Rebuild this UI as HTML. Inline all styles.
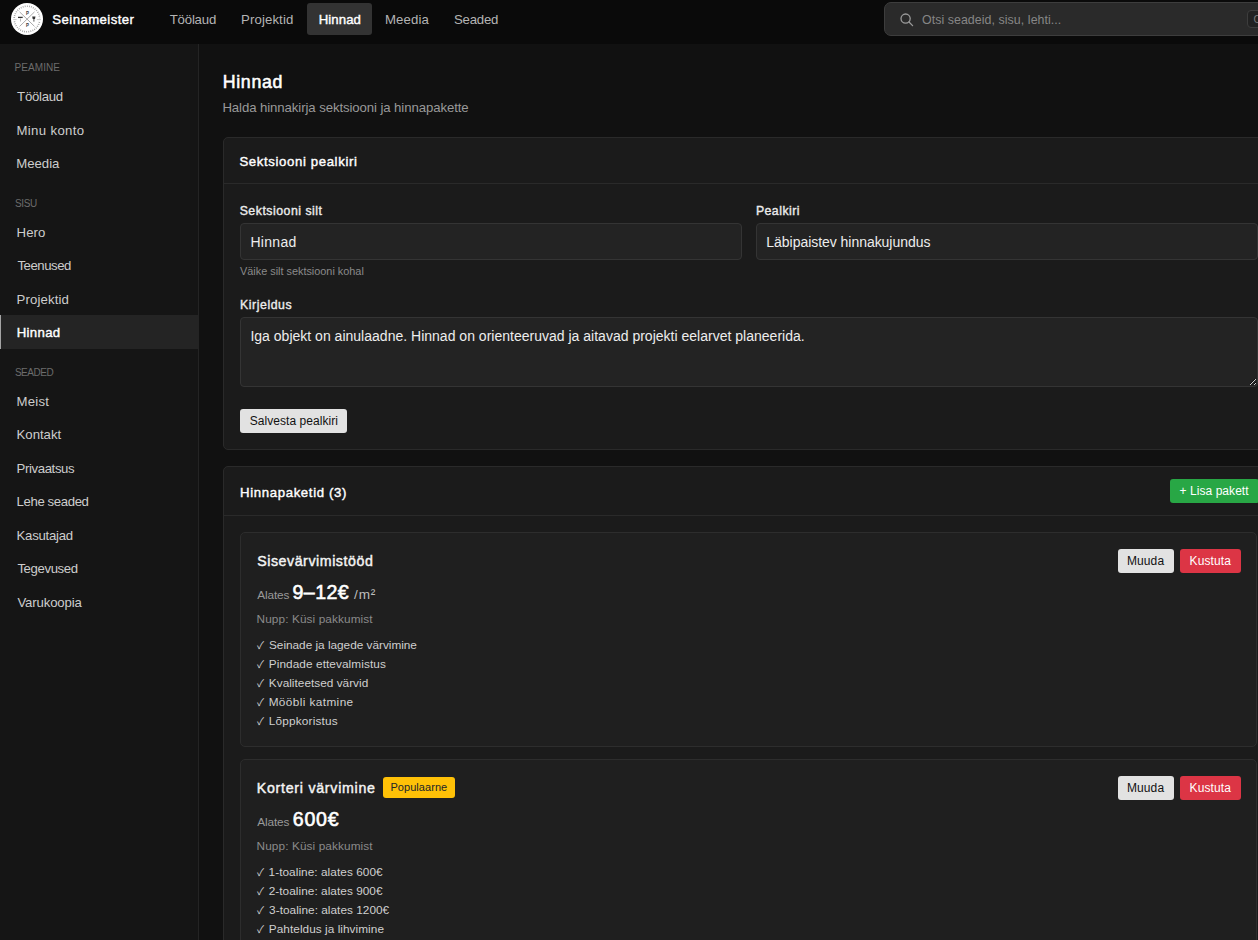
<!DOCTYPE html>
<html lang="et">
<head>
<meta charset="utf-8">
<title>Hinnad – Seinameister</title>
<style>
*{box-sizing:border-box;margin:0;padding:0}
html,body{width:1258px;height:940px;overflow:hidden;background:#111;color:#e6e6e6;
  font-family:"Liberation Sans",sans-serif;font-size:13px}
body *{position:absolute}
.t{white-space:nowrap;line-height:1;font-style:normal;font-weight:normal;text-decoration:none}
.b{font-weight:normal;-webkit-text-stroke:.03em}
header{background:#0a0a0a}
.pill{border-radius:3px;background:#333}
#search{background:#2a2a2a;border:1px solid #3d3d3d;border-radius:7px}
kbd{background:#222;border:1px solid #3d3d3d;border-radius:4px;font-family:inherit}
aside{background:#151515;border-right:1px solid #242424}
.cur{background:#242424;border-left:1px solid #a4a4a4}
.card{background:#1b1b1b;border:1px solid #2a2a2a;border-radius:5px}
.hr{background:#2a2a2a}
.inp{background:#232323;border:1px solid #343434;border-radius:4px}
button{font-family:inherit;color:inherit}
.btn{border-radius:3px}
.light{background:#e2e2e2}.green{background:#28a745}.red{background:#dc3545}
.pkg{background:#1f1f1f;border:1px solid #2d2d2d;border-radius:5px}
.badge{background:#ffc107;border-radius:3px}
ul{list-style:none}
.ck{font-family:"Liberation Sans","Noto Sans CJK JP",sans-serif}
.nav{color:#b4b4b4}.si{color:#cdcdcd}.sl{color:#6c6c6c}
.w{color:#fff}.mut{color:#999}.dim{color:#8a8a8a}.li{color:#cfcfcf}
</style>
</head>
<body>
<header style="left:0px;top:0px;width:1258px;height:44px;">
  <svg id="logo" style="left:11px;top:3px" width="32" height="32" viewBox="0 0 32 32">
    <circle cx="16" cy="16" r="16" fill="#fff"/>
    <circle cx="16" cy="16" r="12.8" fill="none" stroke="#9a9a9a" stroke-width="1.6" stroke-dasharray="0.8 1.3" transform="rotate(14 16 16)"/>
    <path d="M1.6 15.3h4.8v2.6H1.6zM25.4 15.3h4.8v2.6h-4.8z" fill="#fff"/>
    <path d="M2.2 16.6h3.4M25.8 16.6h4.2" stroke="#b5b5b5" stroke-width=".7"/>
    <path d="M8.6 8.9L23.5 23.4M23.5 8.9L8.6 23.4" stroke="#858585" stroke-width=".7" fill="none"/>
    <text transform="translate(16.4 12.1) scale(.74 1)" font-size="5.9" font-weight="bold" text-anchor="middle" fill="#3a3a3a" font-family="Liberation Sans,sans-serif">P</text>
    <text transform="translate(16.4 24.3) scale(.74 1)" font-size="5.9" font-weight="bold" text-anchor="middle" fill="#3a3a3a" font-family="Liberation Sans,sans-serif">P</text>
    <path d="M7 14.4h4.7" stroke="#333" stroke-width="1.3" fill="none"/>
    <path d="M9.5 15.5v3" stroke="#aaa" stroke-width=".8" fill="none"/>
    <path d="M21.2 13.4h3.3l-.5 2.7h-2.3z" fill="#333"/>
    <path d="M22.9 16v2.6" stroke="#555" stroke-width="1" fill="none"/>
  </svg>
  <a class="t b w" style="left:52.32px;top:13.41px;font-size:13.2px;letter-spacing:0.42px;">Seinameister</a>
  <nav style="left:158px;top:3px;width:352px;height:32px;">
    <a class="t nav" style="left:11.78px;top:10.11px;font-size:13.2px;letter-spacing:-0.2px;">Töölaud</a>
    <a class="t nav" style="left:83px;top:10.11px;font-size:13.2px;letter-spacing:0.12px;">Projektid</a>
    <span class="pill" style="left:149px;top:0px;width:65px;height:32px;"></span>
    <a class="t b w" style="left:160.73px;top:10.11px;font-size:13.2px;letter-spacing:0.08px;">Hinnad</a>
    <a class="t nav" style="left:227px;top:10.11px;font-size:13.2px;letter-spacing:0.12px;">Meedia</a>
    <a class="t nav" style="left:296px;top:10.11px;font-size:13.2px;letter-spacing:-0.22px;">Seaded</a>
  </nav>
  <div id="search" style="left:884px;top:2px;width:460px;height:34px;">
    <svg style="left:15px;top:10px" width="14" height="14" viewBox="0 0 14 14" fill="none" stroke="#9a9a9a" stroke-width="1.3" stroke-linecap="round"><circle cx="5.6" cy="5.6" r="4.6"/><path d="M9 9l3.6 3.6"/></svg>
    <span class="t" style="left:36.94px;top:11.21px;font-size:12.4px;letter-spacing:0.06px;color:#868686">Otsi seadeid, sisu, lehti...</span>
    <kbd style="left:362px;top:7px;width:60px;height:18px;">
      <span class="t" style="left:5.55px;top:4.21px;font-size:10px;color:#7a7a7a">Ctrl K</span>
    </kbd>
  </div>
</header>
<aside style="left:0px;top:44px;width:199px;height:896px;">
  <span class="cur" style="left:0px;top:271px;width:198px;height:34px;"></span>
  <span class="t sl" style="left:14.51px;top:19.21px;font-size:10px;letter-spacing:0.08px;">PEAMINE</span>
  <a class="t si" style="left:17.12px;top:45.91px;font-size:13.2px;letter-spacing:-0.27px;">Töölaud</a>
  <a class="t si" style="left:16.53px;top:79.61px;font-size:13.2px;letter-spacing:0.34px;">Minu konto</a>
  <a class="t si" style="left:16.33px;top:112.81px;font-size:13.2px;letter-spacing:-0.04px;">Meedia</a>
  <span class="t sl" style="left:14.96px;top:155.1px;font-size:10px;letter-spacing:-0.38px;">SISU</span>
  <a class="t si" style="left:16.57px;top:182.11px;font-size:13.2px;letter-spacing:0.05px;">Hero</a>
  <a class="t si" style="left:17.38px;top:215px;font-size:13.2px;letter-spacing:-0.46px;">Teenused</a>
  <a class="t si" style="left:16.57px;top:248.91px;font-size:13.2px;letter-spacing:0.12px;">Projektid</a>
  <a class="t si b w" style="left:16.73px;top:281.61px;font-size:13.2px;letter-spacing:0.33px;">Hinnad</a>
  <span class="t sl" style="left:14.91px;top:324.01px;font-size:10px;letter-spacing:-0.46px;">SEADED</span>
  <a class="t si" style="left:16.57px;top:351px;font-size:13.2px;letter-spacing:0.24px;">Meist</a>
  <a class="t si" style="left:16.57px;top:384px;font-size:13.2px;letter-spacing:-0.03px;">Kontakt</a>
  <a class="t si" style="left:16.57px;top:418px;font-size:13.2px;letter-spacing:-0.39px;">Privaatsus</a>
  <a class="t si" style="left:16.57px;top:450.91px;font-size:13.2px;letter-spacing:-0.39px;">Lehe seaded</a>
  <a class="t si" style="left:16.57px;top:484.91px;font-size:13.2px;letter-spacing:-0.27px;">Kasutajad</a>
  <a class="t si" style="left:17.38px;top:517.81px;font-size:13.2px;letter-spacing:-0.38px;">Tegevused</a>
  <a class="t si" style="left:17.43px;top:551.81px;font-size:13.2px;letter-spacing:-0.15px;">Varukoopia</a>
</aside>
<main style="left:199px;top:44px;width:1059px;height:896px;overflow:hidden">
  <h1 class="t b w" style="left:23.73px;top:30.01px;font-size:17.8px;letter-spacing:0.66px;">Hinnad</h1>
  <p class="t mut" style="left:23.45px;top:57.31px;font-size:13.2px;letter-spacing:-0.09px;">Halda hinnakirja sektsiooni ja hinnapakette</p>
  <section class="card" style="left:24px;top:93px;width:1100px;height:313px;">
    <span class="hr" style="left:0px;top:45px;width:1098px;height:1px;"></span>
    <h2 class="t b w" style="left:15.43px;top:16.71px;font-size:13.2px;letter-spacing:0.62px;">Sektsiooni pealkiri</h2>
    <label class="t b" style="left:15.66px;top:67.3px;font-size:12.3px;letter-spacing:0.51px;color:#ececec">Sektsiooni silt</label>
    <div class="inp" style="left:16px;top:85px;width:502px;height:37px;">
      <span class="t" style="left:9.39px;top:11.11px;font-size:14px;letter-spacing:0.32px;color:#ededed">Hinnad</span>
    </div>
    <small class="t dim" style="left:16.01px;top:127.71px;font-size:10.9px;letter-spacing:-0.01px;">Väike silt sektsiooni kohal</small>
    <label class="t b" style="left:531.9px;top:66.91px;font-size:12.3px;letter-spacing:0.47px;color:#ececec">Pealkiri</label>
    <div class="inp" style="left:532px;top:85px;width:502px;height:37px;">
      <span class="t" style="left:9.35px;top:11.41px;font-size:14px;letter-spacing:-0.04px;color:#ededed">Läbipaistev hinnakujundus</span>
    </div>
    <label class="t b" style="left:16.08px;top:161.1px;font-size:12.3px;letter-spacing:0.55px;color:#ececec">Kirjeldus</label>
    <div class="inp" style="left:16px;top:179px;width:1018px;height:70px;">
      <span class="t" style="left:9.42px;top:10.91px;font-size:14px;letter-spacing:0.01px;color:#ededed">Iga objekt on ainulaadne. Hinnad on orienteeruvad ja aitavad projekti eelarvet planeerida.</span>
      <svg style="left:1009px;top:61px" width="6" height="6" viewBox="0 0 6 6" shape-rendering="crispEdges"><g fill="#0c0c0c"><rect x="0" y="4" width="1" height="1"/><rect x="1" y="3" width="1" height="1"/><rect x="2" y="2" width="1" height="1"/><rect x="3" y="1" width="1" height="1"/><rect x="4" y="0" width="1" height="1"/><rect x="4" y="4" width="1" height="1"/><rect x="5" y="3" width="1" height="1"/></g><g fill="#cdcdcd"><rect x="0" y="5" width="1" height="1"/><rect x="1" y="4" width="1" height="1"/><rect x="2" y="3" width="1" height="1"/><rect x="3" y="2" width="1" height="1"/><rect x="4" y="1" width="1" height="1"/><rect x="5" y="0" width="1" height="1"/><rect x="4" y="5" width="1" height="1"/><rect x="5" y="4" width="1" height="1"/></g></svg>
    </div>
    <button class="btn light" style="left:16px;top:271px;width:107px;height:24px;border:0">
      <span class="t" style="left:9.76px;top:5.8px;font-size:12px;letter-spacing:0.05px;color:#111">Salvesta pealkiri</span>
    </button>
  </section>
  <section class="card" style="left:24px;top:422px;width:1100px;height:560px;">
    <span class="hr" style="left:0px;top:48px;width:1098px;height:1px;"></span>
    <h2 class="t b w" style="left:16.12px;top:18.81px;font-size:13.2px;letter-spacing:0.63px;">Hinnapaketid (3)</h2>
    <button class="btn green" style="left:946px;top:12px;width:89px;height:24px;border:0">
      <span class="t w" style="left:9.62px;top:5.91px;font-size:12px;letter-spacing:0.05px;">+ Lisa pakett</span>
    </button>
    <article class="pkg" style="left:16px;top:65px;width:1017px;height:215px;">
      <h3 class="t b" style="left:16.16px;top:20.61px;font-size:14.2px;letter-spacing:0.56px;color:#f4f4f4">Sisevärvimistööd</h3>
      <button class="btn light" style="left:877px;top:16px;width:56px;height:24px;border:0">
        <span class="t" style="left:8.88px;top:6.11px;font-size:12px;letter-spacing:0.13px;color:#111">Muuda</span>
      </button>
      <button class="btn red" style="left:939px;top:16px;width:61px;height:24px;border:0">
        <span class="t w" style="left:9.57px;top:6.11px;font-size:12px;letter-spacing:0.12px;">Kustuta</span>
      </button>
      <span class="t mut" style="left:16.35px;top:56.71px;font-size:11.8px;letter-spacing:-0.15px;">Alates</span>
      <strong class="t b w" style="left:51.59px;top:49.71px;font-size:19.6px;letter-spacing:0.39px;">9–12€</strong>
      <span class="t" style="left:113.07px;top:54.71px;font-size:13.6px;letter-spacing:0.85px;color:#bdbdbd">/m²</span>
      <span class="t dim" style="left:15.57px;top:80.8px;font-size:11.8px;letter-spacing:0.1px;">Nupp: Küsi pakkumist</span>
      <ul style="left:16px;top:101px;width:400px;height:95.5px;">
        <li style="left:0px;top:0px;width:400px;height:19.1px;">
          <span class="t li ck" style="left:0.08px;top:6.8px;font-size:10.3px;">✓</span>
          <span class="t li" style="left:11.98px;top:5.8px;font-size:11.8px;letter-spacing:-0.01px;">Seinade ja lagede värvimine</span>
        </li>
        <li style="left:0px;top:19.1px;width:400px;height:19.1px;">
          <span class="t li ck" style="left:0.08px;top:6.81px;font-size:10.3px;">✓</span>
          <span class="t li" style="left:11.8px;top:5.81px;font-size:11.8px;letter-spacing:0.08px;">Pindade ettevalmistus</span>
        </li>
        <li style="left:0px;top:38.2px;width:400px;height:19.1px;">
          <span class="t li ck" style="left:0.08px;top:6.82px;font-size:10.3px;">✓</span>
          <span class="t li" style="left:11.85px;top:5.81px;font-size:11.8px;letter-spacing:0.02px;">Kvaliteetsed värvid</span>
        </li>
        <li style="left:0px;top:57.3px;width:400px;height:19.1px;">
          <span class="t li ck" style="left:0.08px;top:6.82px;font-size:10.3px;">✓</span>
          <span class="t li" style="left:11.63px;top:5.82px;font-size:11.8px;letter-spacing:0.4px;">Mööbli katmine</span>
        </li>
        <li style="left:0px;top:76.4px;width:400px;height:19.1px;">
          <span class="t li ck" style="left:0.08px;top:6.82px;font-size:10.3px;">✓</span>
          <span class="t li" style="left:11.85px;top:5.82px;font-size:11.8px;letter-spacing:0.17px;">Lõppkoristus</span>
        </li>
      </ul>
    </article>
    <article class="pkg" style="left:16px;top:292px;width:1017px;height:240px;">
      <h3 class="t b" style="left:15.74px;top:20.5px;font-size:14.2px;letter-spacing:0.74px;color:#f4f4f4">Korteri värvimine</h3>
      <span class="badge" style="left:142px;top:17px;width:72px;height:21px;">
        <span class="t" style="left:7.4px;top:4.9px;font-size:11px;letter-spacing:0.06px;color:#212529">Populaarne</span>
      </span>
      <button class="btn light" style="left:877px;top:16px;width:56px;height:24px;border:0">
        <span class="t" style="left:8.88px;top:6px;font-size:12px;letter-spacing:0.13px;color:#111">Muuda</span>
      </button>
      <button class="btn red" style="left:939px;top:16px;width:61px;height:24px;border:0">
        <span class="t w" style="left:9.57px;top:6px;font-size:12px;letter-spacing:0.12px;">Kustuta</span>
      </button>
      <span class="t mut" style="left:16.35px;top:56.6px;font-size:11.8px;letter-spacing:-0.15px;">Alates</span>
      <strong class="t b w" style="left:51.73px;top:49.6px;font-size:19.6px;letter-spacing:0.76px;">600€</strong>
      <span class="t dim" style="left:15.57px;top:80.71px;font-size:11.8px;letter-spacing:0.1px;">Nupp: Küsi pakkumist</span>
      <ul style="left:16px;top:101px;width:400px;height:95.5px;">
        <li style="left:0px;top:0px;width:400px;height:19.1px;">
          <span class="t li ck" style="left:0.08px;top:6.71px;font-size:10.3px;">✓</span>
          <span class="t li" style="left:11.54px;top:5.71px;font-size:11.8px;letter-spacing:0.06px;">1-toaline: alates 600€</span>
        </li>
        <li style="left:0px;top:19.1px;width:400px;height:19.1px;">
          <span class="t li ck" style="left:0.08px;top:6.71px;font-size:10.3px;">✓</span>
          <span class="t li" style="left:11.69px;top:5.71px;font-size:11.8px;letter-spacing:0.05px;">2-toaline: alates 900€</span>
        </li>
        <li style="left:0px;top:38.2px;width:400px;height:19.1px;">
          <span class="t li ck" style="left:0.08px;top:6.72px;font-size:10.3px;">✓</span>
          <span class="t li" style="left:12.11px;top:5.72px;font-size:11.8px;letter-spacing:0.03px;">3-toaline: alates 1200€</span>
        </li>
        <li style="left:0px;top:57.3px;width:400px;height:19.1px;">
          <span class="t li ck" style="left:0.08px;top:6.71px;font-size:10.3px;">✓</span>
          <span class="t li" style="left:11.8px;top:5.71px;font-size:11.8px;letter-spacing:0.05px;">Pahteldus ja lihvimine</span>
        </li>
        <li style="left:0px;top:76.4px;width:400px;height:19.1px;">
          <span class="t li ck" style="left:0.4px;top:4.4px;font-size:10.3px;">✓</span>
          <span class="t li" style="left:12.5px;top:2.9px;font-size:11.8px;">Kvaliteetsed värvid</span>
        </li>
      </ul>
    </article>
  </section>
</main>
</body>
</html>
